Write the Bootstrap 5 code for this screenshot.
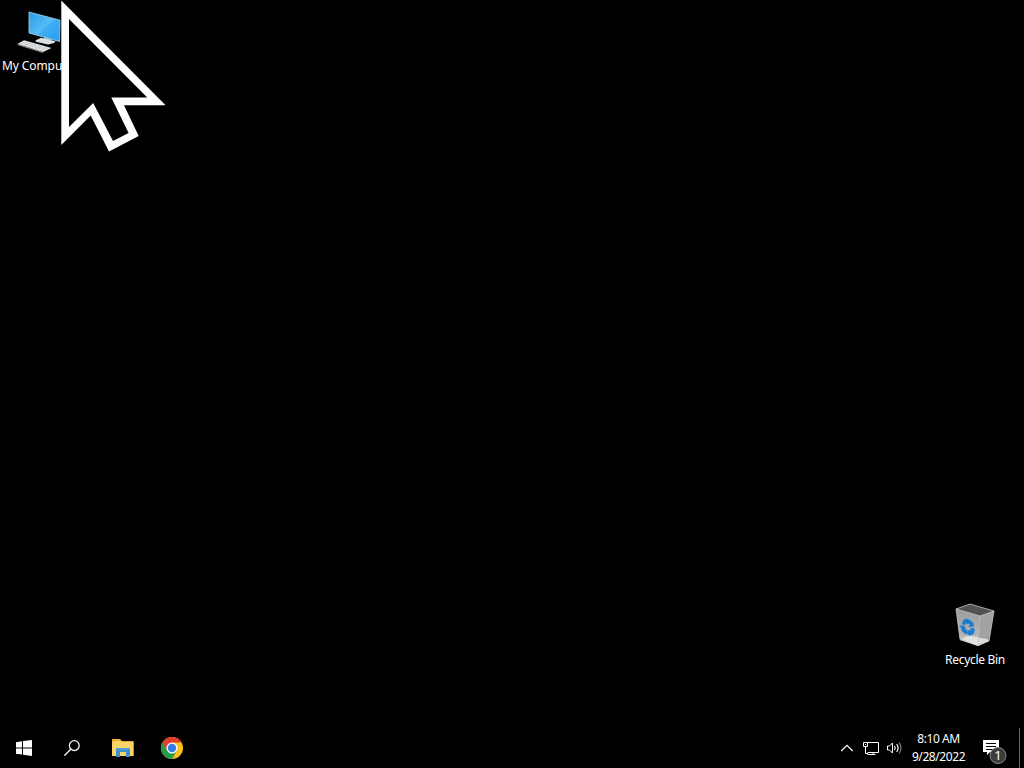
<!DOCTYPE html>
<html lang="en">
<head>
    <meta charset="UTF-8">
    <meta name="viewport" content="width=device-width, initial-scale=1.0">
    <title>Desktop</title>
    <link href="https://cdn.jsdelivr.net/npm/bootstrap@5.3.0/dist/css/bootstrap.min.css" rel="stylesheet">
    <style>
        body {
            background: #000;
            color: #fff;
            font-family: "Noto Sans", "Open Sans", sans-serif;
            font-size: 12px;
            line-height: 18px;
            cursor: default;
        }
        svg { display: block; flex: none; }
        .desk-item { position: absolute; width: 80px; text-align: center; white-space: nowrap; }
        .desk-item svg { margin: 0 auto 1px; }
        #my-computer { left: 0; top: 8px; }
        #recycle-bin { left: 935px; top: 602px; letter-spacing: -.3px; }
        #my-computer span { letter-spacing: -.1px; }
        .pointer { position: absolute; left: 60px; top: 0; z-index: 5; }
        .taskbar { height: 40px; }
        .task-btn { width: 49.5px; height: 40px; padding: 0; border: 0; background: none; display: flex; align-items: center; justify-content: center; }
        .task-btn.system { width: 48px; }
        .pinned { margin-left: 2px; }
        .clock { width: 61px; text-align: center; letter-spacing: -.42px; }
        .notify { width: 50px; }
        .show-desktop { width: 5px; height: 40px; border-left: 1px solid #626262; }
    </style>
</head>
<body class="vh-100 overflow-hidden d-flex flex-column">
    <main class="flex-grow-1 position-relative">
        <div class="desk-item" id="my-computer">
            <svg width="80" height="48" viewBox="0 8 80 48">
                <defs>
                    <linearGradient id="screen" x1="0" y1="0" x2="1" y2="1">
                        <stop offset="0" stop-color="#249ce9"/>
                        <stop offset=".5" stop-color="#58bcf5"/>
                        <stop offset=".55" stop-color="#3dadf3"/>
                        <stop offset="1" stop-color="#299ded"/>
                    </linearGradient>
                </defs>
                <path d="M44 36 52 38 51 41 44 40z" fill="#aab5bb"/>
                <path d="M35.5 40.5 41 37.8 55.5 41.2 54 43 48 44.5 36 41.8z" fill="#dbe1e4"/>
                <path d="M29 12 60 20.2 59.5 41.5 29 33z" fill="url(#screen)" stroke="#a7d9f3" stroke-width=".8"/>
                <path d="M17.5 44 24 40.3 51.5 48 43 52z" fill="#e5e7e8"/>
                <path d="M17.5 44 43 52v1L17.5 45z" fill="#8d9295"/>
                <path d="M20 43 45 50M22.5 41.7 48 49M24 46 31 42.5M29 47.5 36 44M35 49.3 42 45.8M40 51 47 47" fill="none" stroke="#b2b6b9" stroke-width=".5"/>
            </svg>
            <span>My Computer</span>
        </div>

        <div class="desk-item" id="recycle-bin">
            <svg width="80" height="48" viewBox="935 602 80 48">
                <defs>
                    <linearGradient id="binSide" x1="0" y1="0" x2="0" y2="1">
                        <stop offset="0" stop-color="#9b9d9e"/>
                        <stop offset=".68" stop-color="#b0b2b3"/>
                        <stop offset="1" stop-color="#dadada"/>
                    </linearGradient>
                </defs>
                <path d="M956 609 970 604 994 611 980 616z" fill="#505253"/>
                <path d="M956 609 980 616 978 646 960 639z" fill="url(#binSide)"/>
                <path d="M980 616 994 611 989 641 978 646z" fill="#a0a2a3"/>
                <path d="M960 640 968 635.5 987 639 989 641 978 646z" fill="#ececec" opacity=".75"/>
                <path d="M956 609 970 604 994 611 980 616zM956 609 960 639.5 978 645.5 989 641 994 611M980 616 978 645" fill="none" stroke="#c7c9ca" stroke-width=".8"/>
                <g fill="#167dd0" stroke="#167dd0" stroke-width=".5">
                    <path d="M962 624 964 619.5 967 619 969.5 620 967.5 624 965.5 622.5 965 625z"/>
                    <path d="M969 620 972.5 622 974 626 969 627 970 624.5 968 623z"/>
                    <path d="M960.3 625.5 965 626.5 964.5 628 967 630.5 966.5 634.5 962.5 631.5z"/>
                    <path d="M968 630.5 970.5 630.5 971 628 974.5 629 973.5 634 970 635 970 636 967 633z"/>
                </g>
            </svg>
            <span>Recycle Bin</span>
        </div>

        <svg class="pointer" width="108" height="154" viewBox="60 0 108 154">
            <path d="M61.3 .5 165.6 105.2H124l14.7 30.7L109 151.5 90.7 115.5 61.3 145z" fill="#fff"/>
            <path d="M69 19 147.3 97.6H111.3L128.6 133 113 141 93.2 103 69 127z" fill="#000"/>
        </svg>
    </main>

    <footer class="taskbar d-flex align-items-center justify-content-between">
        <div class="d-flex">
            <button class="task-btn system" aria-label="Start">
                <svg width="16" height="16" viewBox="0 0 16 16" fill="#fff">
                    <path d="M0 2.2 6 1.3V7.4H0zM7 1.1 16 0V7.4H7zM0 8.4H6V14.6L0 13.7zM7 8.4H16V16L7 14.8z"/>
                </svg>
            </button>
            <button class="task-btn system" aria-label="Search">
                <svg width="16" height="16" viewBox="0 0 16 16" fill="none" stroke="#fff" stroke-width="1.25">
                    <circle cx="10.3" cy="5.6" r="4.9"/>
                    <path d="M6.8 9.2.4 15.6"/>
                </svg>
            </button>
            <button class="task-btn pinned" aria-label="File Explorer">
                <svg width="22" height="18" viewBox="0 0 22 18">
                    <path d="M0 0H8L10 2H21.5V17H0z" fill="#e8ae35"/>
                    <path d="M1.5 2H8L10 3H21.5V17H0V4z" fill="#fbd469"/>
                    <path d="M4 9H18V18H14V13H8V18H4z" fill="#3e8fcb"/>
                    <path d="M4 9H18V11H4z" fill="#509fd3"/>
                </svg>
            </button>
            <button class="task-btn" aria-label="Chrome">
                <svg width="22" height="22" viewBox="0 0 22 22">
                    <circle cx="11" cy="11" r="11" fill="#fbc116"/>
                    <path d="M1.47 5.5A11 11 0 0 1 20.53 5.5H11L6.24 13.75z" fill="#e33b2e"/>
                    <path d="M1.47 5.5A11 11 0 0 0 11 22L15.76 13.75 11 11 6.24 13.75z" fill="#269b48"/>
                    <circle cx="11" cy="11" r="5.5" fill="#fff"/>
                    <circle cx="11" cy="11" r="4.2" fill="#347be5"/>
                </svg>
            </button>
        </div>

        <div class="d-flex align-items-center">
            <svg width="70" height="40" viewBox="838 728 70 40" fill="none" stroke="#fff" stroke-width="1.2">
                <path d="M841.3 751 847 745.3 852.7 751"/>
                <path d="M868 742.5H878.5V752.5H867.5M873 752.5V755M867.5 754.5H875.5M863.5 742.5H867.5V746.5H863.5zM865.5 746.5V753.5H868M865 744.5H866" stroke-width="1"/>
                <path d="M887.5 746V750H889.5L892.5 753V743L889.5 746z" stroke-width="1"/>
                <path d="M894.5 746Q896 748 894.5 750M896.7 744Q899.5 748 896.7 752"/>
                <path d="M899 742.3Q903 748 899 753.7" stroke="#777"/>
            </svg>
            <div class="clock">8:10 AM<br>9/28/2022</div>
            <div class="notify">
                <svg width="50" height="40" viewBox="969 728 50 40">
                    <path d="M983 740H999V752H990L987 755V752H983z" fill="#fff"/>
                    <path d="M986 743.5H996M986 746.5H996M986 749.5H993" stroke="#000"/>
                    <circle cx="998" cy="755.5" r="8" fill="#3c3c3c" stroke="#8b8b8b"/>
                    <text x="998" y="760" text-anchor="middle" fill="#fff" font-size="13">1</text>
                </svg>
            </div>
            <div class="show-desktop"></div>
        </div>
    </footer>
    <script src="https://cdn.jsdelivr.net/npm/bootstrap@5.3.0/dist/js/bootstrap.bundle.min.js"></script>
</body>
</html>
